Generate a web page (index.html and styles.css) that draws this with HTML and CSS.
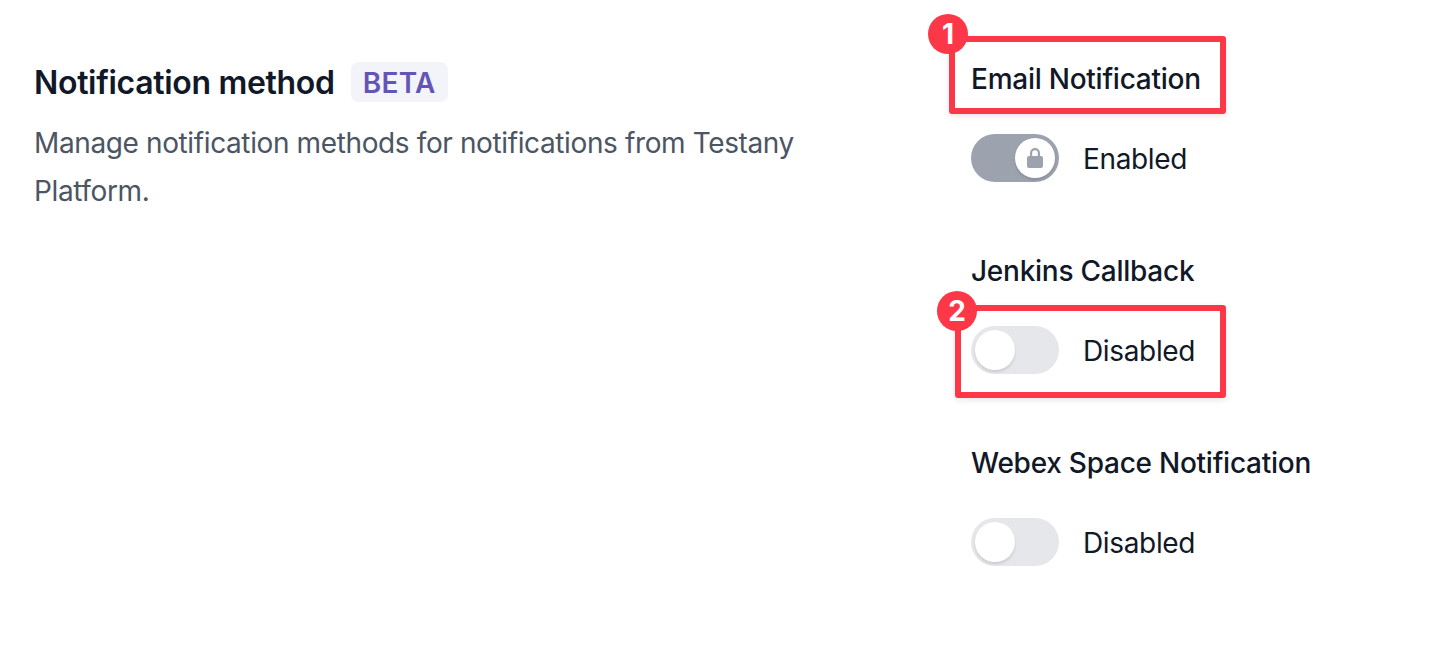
FILE: index.html
```html
<!DOCTYPE html>
<html lang="en">
<head>
<meta charset="utf-8">
<title>Notification method</title>
<link rel="stylesheet" href="styles.css">
</head>
<body>
<main class="page">
  <section class="intro">
    <div class="heading-row">
      <h2 class="heading">Notification method</h2>
      <span class="beta">BETA</span>
    </div>
    <p class="desc">Manage notification methods for notifications from Testany Platform.</p>
  </section>
  <section class="fields">
    <div class="field">
      <div class="label">Email Notification</div>
      <div class="control">
        <span class="toggle on">
          <span class="knob">
            <svg class="lock" viewBox="0 0 16 20" width="16" height="20" aria-hidden="true"><path fill="#9ca3af" fill-rule="evenodd" d="M3 8V5a5 5 0 0 1 10 0v3h1a2 2 0 0 1 2 2v8a2 2 0 0 1-2 2H2a2 2 0 0 1-2-2v-8a2 2 0 0 1 2-2h1Zm7.8 0V5a2.8 2.8 0 0 0-5.600 0v3h5.600Z"/></svg>
          </span>
        </span>
        <span class="state">Enabled</span>
      </div>
    </div>
    <div class="field">
      <div class="label">Jenkins Callback</div>
      <div class="control">
        <span class="toggle"><span class="knob"></span></span>
        <span class="state">Disabled</span>
      </div>
    </div>
    <div class="field">
      <div class="label">Webex Space Notification</div>
      <div class="control">
        <span class="toggle"><span class="knob"></span></span>
        <span class="state">Disabled</span>
      </div>
    </div>
  </section>
</main>
<div class="mark mark-one"></div>
<div class="num num-one">1</div>
<div class="mark mark-two"></div>
<div class="num num-two">2</div>
</body>
</html>
```
FILE: styles.css
```css
* { box-sizing: border-box; }
html, body { margin: 0; height: 100%; background: #fff; overflow: hidden; }
body { position: relative; font-family: Inter, "Noto Sans", sans-serif; color: #111827; }
.page { display: flex; padding: 58px 0 0 34px; }
.intro { width: 938px; flex: none; padding-right: 130px; }
.heading-row { display: flex; align-items: center; gap: 16px; margin-top: 4px; height: 40px; }
.heading { margin: 0; padding-top: 2px; font-size: 32px; line-height: 40px; font-weight: 600; letter-spacing: -0.32px; }
.beta { height: 40px; padding: 1px 12px 0; border-radius: 8px; background: #f3f4fa; color: #6554b8; font-size: 28px; line-height: 40px; font-weight: 600; letter-spacing: 0.3px; }
.desc { margin: 17px 0 0; font-size: 28px; line-height: 48px; color: #4b5563; letter-spacing: -0.38px; }
.fields { display: flex; flex-direction: column; gap: 68px; margin-left: -1px; }
.label { font-size: 28px; line-height: 42px; font-weight: 500; letter-spacing: -0.25px; }
.control { display: flex; align-items: center; gap: 24px; margin-top: 34px; }
.toggle { display: flex; align-items: center; width: 88px; height: 48px; padding: 4px; border-radius: 24px; background: #e5e7eb; }
.toggle.on { background: #9ca3af; justify-content: flex-end; }
.knob { display: flex; align-items: center; justify-content: center; width: 40px; height: 40px; border-radius: 50%; background: #fff; box-shadow: 0 2px 3px rgba(0, 0, 0, 0.12); }
.lock { display: block; }
.state { padding-top: 2px; font-size: 28px; line-height: 40px; letter-spacing: -0.35px; }
.mark { position: absolute; border: 6px solid #fb3748; border-radius: 3px; box-shadow: 0 2px 6px rgba(0, 0, 0, 0.1); }
.mark-one { left: 949px; top: 36px; width: 277px; height: 78px; }
.mark-two { left: 955px; top: 305px; width: 271px; height: 93px; }
.num { position: absolute; width: 40px; height: 40px; border-radius: 50%; background: #fb3748; color: #fff; font-size: 28px; line-height: 40px; font-weight: 700; text-align: center; }
.num-one { left: 928px; top: 14px; }
.num-two { left: 937px; top: 291px; }
```
